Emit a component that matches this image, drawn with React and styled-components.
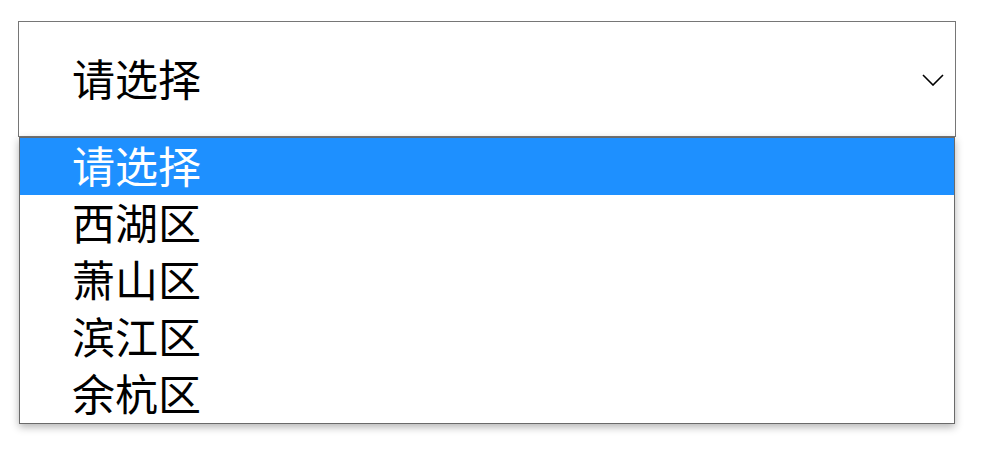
import React from "react";
import styled, { createGlobalStyle } from "styled-components";

const Global = createGlobalStyle`
  html, body { margin: 0; padding: 0; background: #fff; }
  body { font-family: "Noto Sans CJK SC", "Noto Sans", sans-serif; }
`;

const Page = styled.div`
  padding: 21px 0 45px 18px;
`;

const SelectWrap = styled.div`
  width: 938px;
  display: flex;
  flex-direction: column;
`;

const SelectBox = styled.div`
  box-sizing: border-box;
  height: 116px;
  border: 1px solid #767676;
  background: #fff;
  display: flex;
  align-items: center;
  justify-content: space-between;
  padding: 0 11px 0 53px;
`;

const Value = styled.span`
  font-size: 43px;
  line-height: 53px;
  padding-bottom: 4px;
  color: #000;
`;

const Chevron = styled.svg`
  width: 22px;
  height: 12px;
  display: block;
  margin-top: 2px;
`;

const Menu = styled.ul`
  box-sizing: border-box;
  width: 936px;
  margin: 0 0 0 1px;
  padding: 0;
  list-style: none;
  border: 1px solid #6a6a6a;
  background: #fff;
  box-shadow: 0 3px 8px rgba(0, 0, 0, 0.3);
`;

const Option = styled.li`
  box-sizing: border-box;
  height: 57px;
  line-height: 53px;
  padding-bottom: 4px;
  font-size: 43px;
  padding-left: 52px;
  color: ${(p) => (p.$active ? "#fff" : "#000")};
  background: ${(p) => (p.$active ? "#1e90ff" : "transparent")};
  white-space: nowrap;
`;

const options = ["请选择", "西湖区", "萧山区", "滨江区", "余杭区"];

export default function App() {
  return (
    <Page>
      <Global />
      <SelectWrap>
        <SelectBox>
          <Value>请选择</Value>
          <Chevron viewBox="0 0 22 12">
            <path d="M1 1 L11 11 L21 1" fill="none" stroke="#000" strokeWidth="1.6" />
          </Chevron>
        </SelectBox>
        <Menu>
          {options.map((o, i) => (
            <Option key={o} $active={i === 0}>
              {o}
            </Option>
          ))}
        </Menu>
      </SelectWrap>
    </Page>
  );
}
